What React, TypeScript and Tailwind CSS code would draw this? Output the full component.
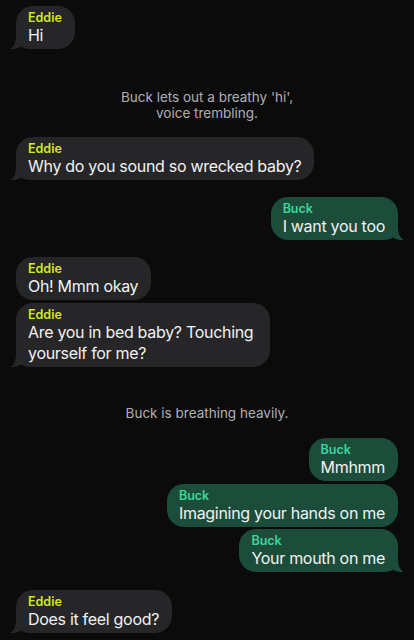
import React from "react";

type Msg =
  | { kind: "msg"; from: "Eddie" | "Buck"; text: string; tail?: boolean; mt: string; maxW?: string }
  | { kind: "sys"; text: string; mt: string };

const msgs: Msg[] = [
  { kind: "msg", from: "Eddie", text: "Hi", tail: true, mt: "mt-[6px]" },
  { kind: "sys", text: "Buck lets out a breathy 'hi', voice trembling.", mt: "mt-[40px]" },
  { kind: "msg", from: "Eddie", text: "Why do you sound so wrecked baby?", tail: true, mt: "mt-[16px]" },
  { kind: "msg", from: "Buck", text: "I want you too", tail: true, mt: "mt-[17px]" },
  { kind: "msg", from: "Eddie", text: "Oh! Mmm okay", mt: "mt-[17px]" },
  {
    kind: "msg",
    from: "Eddie",
    text: "Are you in bed baby? Touching yourself for me?",
    tail: true,
    mt: "mt-[3px]",
    maxW: "max-w-[254px]",
  },
  { kind: "sys", text: "Buck is breathing heavily.", mt: "mt-[38px]" },
  { kind: "msg", from: "Buck", text: "Mmhmm", mt: "mt-[17px]" },
  { kind: "msg", from: "Buck", text: "Imagining your hands on me", mt: "mt-[3px]" },
  { kind: "msg", from: "Buck", text: "Your mouth on me", tail: true, mt: "mt-[2px]" },
  { kind: "msg", from: "Eddie", text: "Does it feel good?", tail: true, mt: "mt-[18px]" },
];

function Tail({ color, right }: { color: string; right?: boolean }) {
  return (
    <svg
      viewBox="0 0 20 14"
      width="20"
      height="14"
      className={
        "absolute bottom-0 " + (right ? "right-[-6px] -scale-x-100" : "left-[-6px]")
      }
    >
      <path
        d="M6 0 C6 8 4 12 0 14 C5 14.5 9 13 11 11.5 C13 13 16 14 20 14 L20 0 Z"
        fill={color}
      />
    </svg>
  );
}

export default function App() {
  return (
    <div
      className="h-[640px] overflow-hidden w-full bg-[#0b0b0b] px-4 flex flex-col"
      style={{ fontFamily: "Inter, 'Noto Sans', sans-serif" }}
    >
      {msgs.map((m, i) => {
        if (m.kind === "sys") {
          return (
            <div
              key={i}
              className={`${m.mt} self-center max-w-[200px] text-center text-[13.5px] leading-[16px] text-[#b0b0b2]`}
            >
              {m.text}
            </div>
          );
        }
        const isBuck = m.from === "Buck";
        const bg = isBuck ? "#1b4d3a" : "#262628";
        return (
          <div
            key={i}
            className={`${m.mt} ${m.maxW ?? "max-w-[310px]"} shrink-0 relative rounded-[17px] pl-3 pr-[13px] pt-[5px] pb-[3px] ${
              isBuck ? "self-end bg-[#1b4d3a]" : "self-start bg-[#262628]"
            }`}
          >
            {m.tail && <Tail color={bg} right={isBuck} />}
            <div
              className={`relative text-[12.5px] leading-[14px] font-semibold ${
                isBuck ? "text-[#3fd59a]" : "text-[#d6e81c]"
              }`}
            >
              {m.from}
            </div>
            <div className="relative text-[16px] leading-[21px] text-[#f2f2f2] tracking-[-0.3px]">
              {m.text}
            </div>
          </div>
        );
      })}
    </div>
  );
}
